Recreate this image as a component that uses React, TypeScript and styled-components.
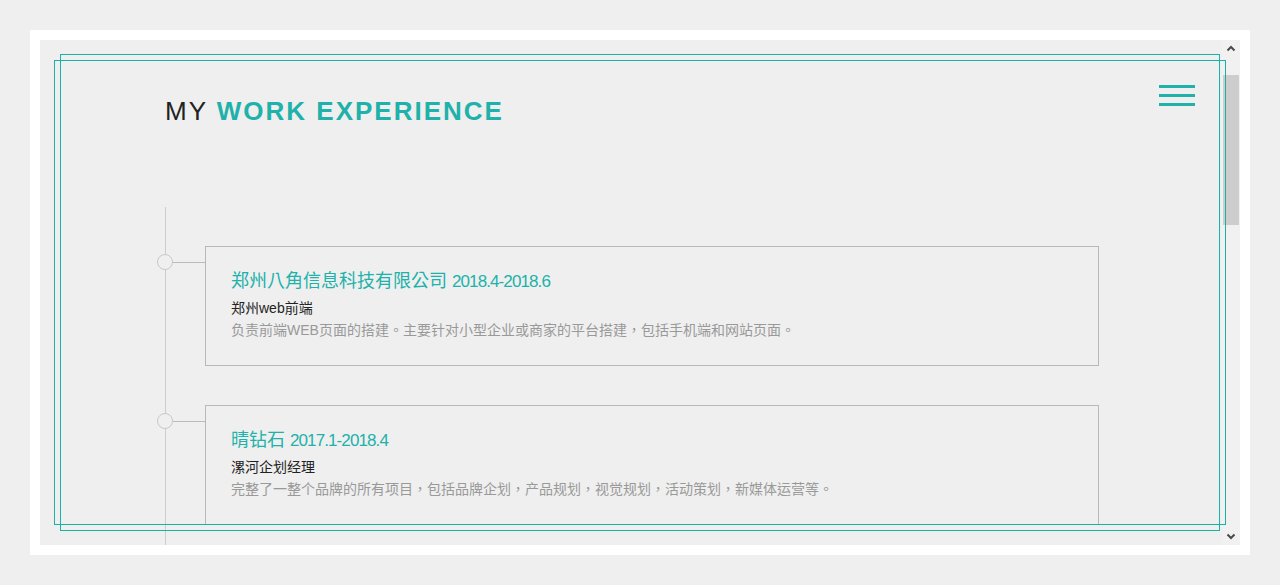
import React from 'react';
import styled, { createGlobalStyle } from 'styled-components';

const GlobalStyle = createGlobalStyle`
  html, body {
    margin: 0;
    padding: 0;
    background: #efefef;
  }
  body {
    font-family: "Liberation Sans", "Noto Sans CJK TC", Arial, sans-serif;
  }
  *, *::before, *::after {
    box-sizing: border-box;
  }
`;

const Shell = styled.div`
  position: relative;
  margin: 30px;
  width: 1220px;
  height: 525px;
  padding: 10px;
  background: #ffffff;
  display: flex;
`;

const Viewport = styled.main`
  position: relative;
  flex: 1;
  height: 505px;
  overflow: hidden;
  background: #efefef;
`;

const Frame = styled.div<{ $left: number; $top: number; $w: number; $h: number }>`
  position: absolute;
  left: ${(p) => p.$left}px;
  top: ${(p) => p.$top}px;
  width: ${(p) => p.$w}px;
  height: ${(p) => p.$h}px;
  border: 1px solid #17b3a9;
  pointer-events: none;
  z-index: 3;
`;

const Heading = styled.h1`
  margin: 0;
  padding: 58px 0 0 125px;
  font-size: 26px;
  line-height: 26px;
  letter-spacing: 2px;
  font-weight: normal;
  color: #222222;
`;

const Accent = styled.span`
  color: #20b2aa;
  font-weight: bold;
`;

const MenuButton = styled.button`
  position: absolute;
  top: 45px;
  right: 27px;
  width: 36px;
  padding: 0;
  border: 0;
  background: transparent;
  display: flex;
  flex-direction: column;
  gap: 6px;
`;

const MenuLine = styled.span`
  display: block;
  height: 3px;
  background: #20b2aa;
`;

const Timeline = styled.section`
  margin: 83px 123px 0 125px;
  border-left: 1px solid #cccccc;
  padding: 39px 0 90px;
`;

const Item = styled.article`
  position: relative;
  padding-left: 39px;
  margin-bottom: 39px;
`;

const Dot = styled.span`
  position: absolute;
  left: -9px;
  top: 8px;
  width: 16px;
  height: 16px;
  border: 1px solid #c8c8c8;
  border-radius: 50%;
  background: #efefef;
`;

const Connector = styled.span`
  position: absolute;
  left: 7px;
  top: 16px;
  width: 32px;
  height: 1px;
  background: #bbbbbb;
`;

const Card = styled.div`
  height: 120px;
  border: 1px solid #b8b8b8;
  padding: 22px 25px 25px;
`;

const CardTitle = styled.h3`
  margin: 0 0 3px;
  font-size: 18px;
  line-height: 24px;
  font-weight: normal;
  color: #20b2aa;
`;

const DateText = styled.span`
  font-size: 17px;
  letter-spacing: -0.9px;
`;

const Role = styled.p`
  margin: 0;
  font-size: 14px;
  line-height: 22px;
  color: #222222;
`;

const Desc = styled.p`
  margin: 0;
  font-size: 14px;
  line-height: 22px;
  color: #999999;
`;

const ScrollBar = styled.div`
  width: 18px;
  height: 505px;
  background: #f1f1f1;
  display: flex;
  flex-direction: column;
`;

const ScrollArrow = styled.div`
  height: 17px;
  display: flex;
  align-items: center;
  justify-content: center;
`;

const ScrollTrack = styled.div`
  flex: 1;
`;

const ScrollThumb = styled.div`
  margin: 18px 1px 0;
  height: 150px;
  background: #cdcdcd;
`;

const Chevron = ({ down }: { down?: boolean }) => (
  <svg width="10" height="7" viewBox="0 0 10 7">
    <polyline
      points={down ? '1.5,1.5 5,5 8.5,1.5' : '1.5,5.5 5,2 8.5,5.5'}
      fill="none"
      stroke="#4a4a4a"
      strokeWidth="2"
    />
  </svg>
);

const jobs = [
  {
    company: '郑州八角信息科技有限公司',
    date: '2018.4-2018.6',
    role: '郑州web前端',
    desc: '负责前端WEB页面的搭建。主要针对小型企业或商家的平台搭建，包括手机端和网站页面。',
  },
  {
    company: '晴钻石',
    date: '2017.1-2018.4',
    role: '漯河企划经理',
    desc: '完整了一整个品牌的所有项目，包括品牌企划，产品规划，视觉规划，活动策划，新媒体运营等。',
  },
];

export default function App() {
  return (
    <>
      <GlobalStyle />
      <Shell lang="zh-Hant">
        <Viewport>
          <Heading lang="en">
            MY <Accent>WORK EXPERIENCE</Accent>
          </Heading>
          <MenuButton aria-label="menu">
            <MenuLine />
            <MenuLine />
            <MenuLine />
          </MenuButton>
          <Timeline>
            {jobs.map((job) => (
              <Item key={job.company}>
                <Dot />
                <Connector />
                <Card>
                  <CardTitle>
                    {job.company} <DateText>{job.date}</DateText>
                  </CardTitle>
                  <Role>{job.role}</Role>
                  <Desc>{job.desc}</Desc>
                </Card>
              </Item>
            ))}
          </Timeline>
        </Viewport>
        <ScrollBar>
          <ScrollArrow>
            <Chevron />
          </ScrollArrow>
          <ScrollTrack>
            <ScrollThumb />
          </ScrollTrack>
          <ScrollArrow>
            <Chevron down />
          </ScrollArrow>
        </ScrollBar>
        <Frame $left={30} $top={24} $w={1160} $h={477} />
        <Frame $left={24} $top={30} $w={1172} $h={465} />
      </Shell>
    </>
  );
}
